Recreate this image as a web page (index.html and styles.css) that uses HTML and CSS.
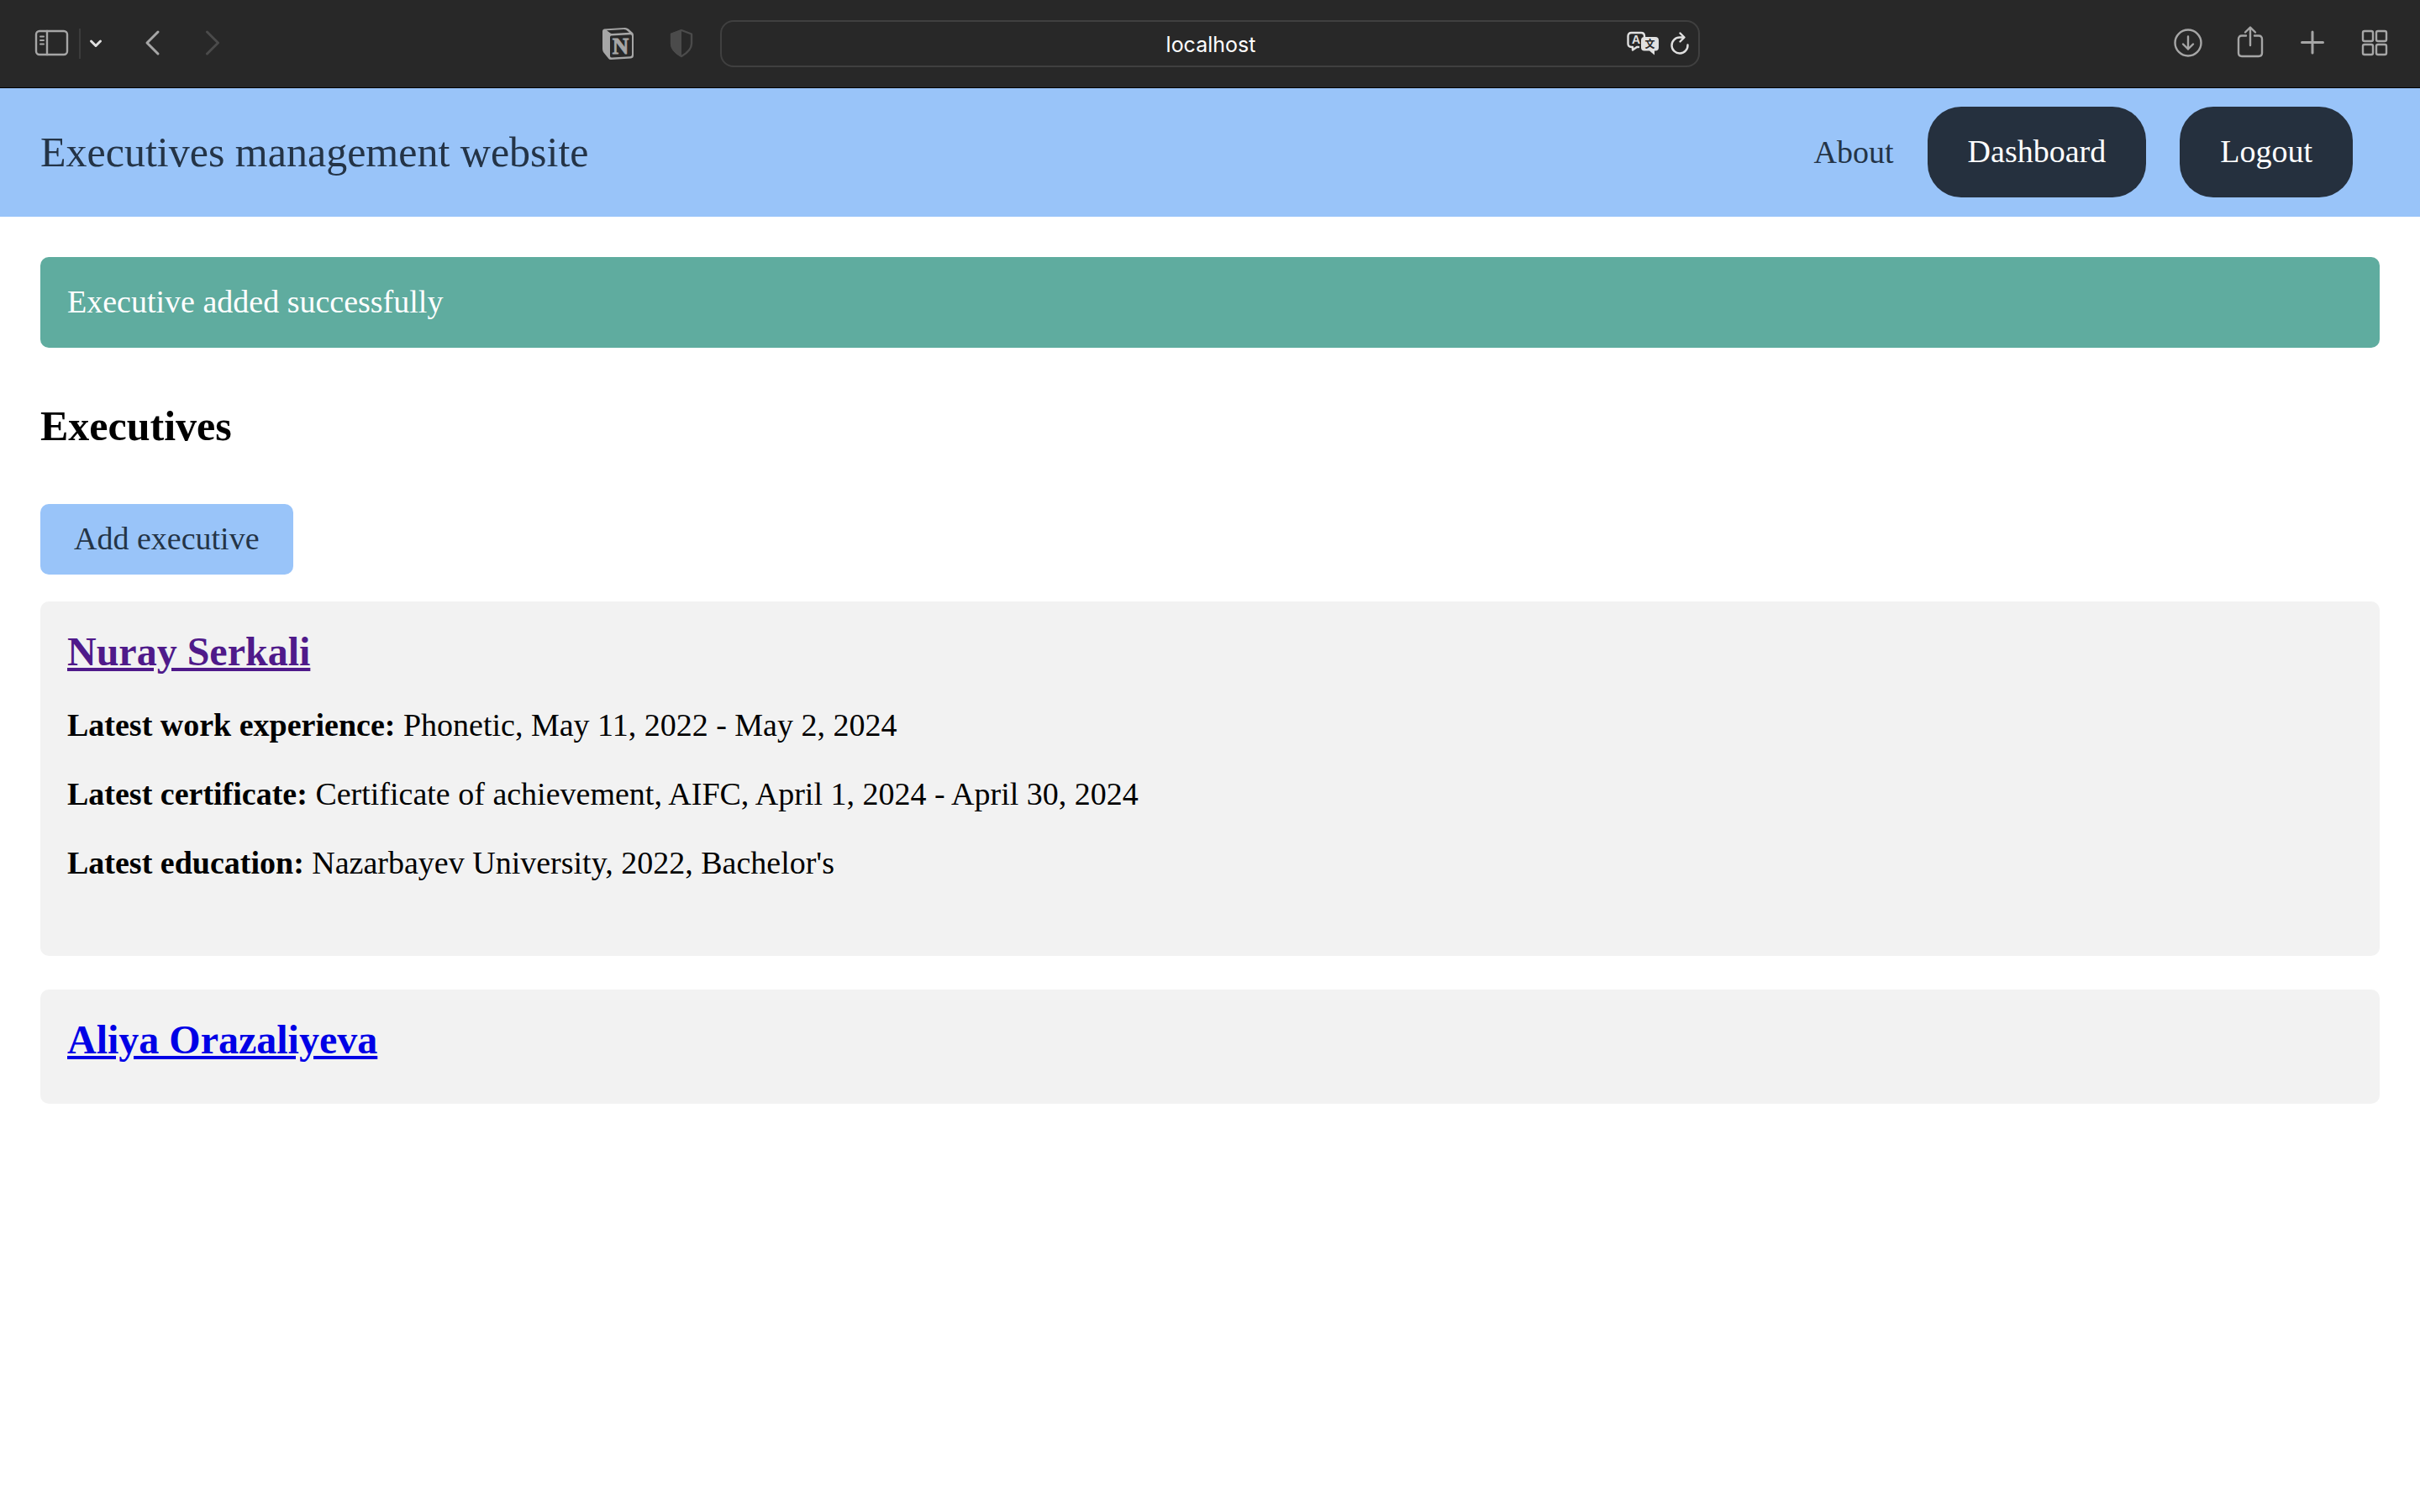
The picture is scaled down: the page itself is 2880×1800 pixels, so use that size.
FILE: index.html
```html
<!DOCTYPE html>
<html lang="en">
<head>
<meta charset="utf-8">
<meta name="viewport" content="width=device-width, initial-scale=1">
<title>Executives management website</title>
<link rel="stylesheet" href="styles.css">
</head>
<body>
<div class="toolbar">
  <div class="tools tools-left">
    <button class="tool" type="button" aria-label="Show sidebar">
      <svg class="icon" viewBox="0 0 44 44"><rect x="3" y="7" width="37" height="28" rx="4"/><path d="M16 7v28"/><path class="thin" d="M8 13.500h4M8 18h4M8 22.500h4"/></svg>
    </button>
    <span class="divider"></span>
    <button class="tool tool-small" type="button" aria-label="Tab groups">
      <svg class="icon icon-light" viewBox="0 0 24 44"><path class="bold" d="M6.500 19l5.500 5.500 5.500-5.500"/></svg>
    </button>
    <button class="tool tool-back" type="button" aria-label="Back">
      <svg class="icon" viewBox="0 0 44 44"><path class="bold" d="M29 8l-13 13 13 13"/></svg>
    </button>
    <button class="tool tool-forward" type="button" aria-label="Forward" disabled>
      <svg class="icon icon-dim" viewBox="0 0 44 44"><path class="bold" d="M15.500 8l13 13-13 13"/></svg>
    </button>
    <button class="tool tool-notion" type="button" aria-label="Notion">
      <svg class="icon" viewBox="1 0 44 44"><path class="solid" fill-rule="evenodd" d="M5 4.500L30 3Q32 3 34 4.500L39 9Q40 10 40 12V36Q40 39 37 39.500L13 41Q11 41 10 39.500L4 32Q3 30.500 3 28V7Q3 5 5 4.500ZM8 6.200L12.500 9.500Q13.500 10 15 10L35 8.700L31 5.600Q30 5 28 5.100ZM13.500 12.500Q12 12.600 12 14.500V36.500Q12 38.500 14 38.400L36 37.200Q38 37 38 35V13Q38 11 36 11.200Z"/><text class="mark mark-n" x="24.500" y="34">N</text></svg>
    </button>
    <button class="tool" type="button" aria-label="Privacy report">
      <svg class="icon icon-dim" viewBox="0 0 44 44"><path d="M22 6l12 4.500V22c0 6-5 11-12 15-7-4-12-9-12-15V10.500z"/><path class="solid" d="M22 5v33C14 34 9 28 9 22V10z"/></svg>
    </button>
  </div>
  <div class="address">
    <input class="address-input" type="text" value="localhost" aria-label="Address">
    <div class="address-actions">
      <button class="tool tool-translate" type="button" aria-label="Translate">
        <svg class="icon icon-light" viewBox="2 0 40 44"><path d="M17 26h-2L10 29.500V26H8.500q-4 0-4-4V13q0-4 4-4H20q4 0 4 4v1.500"/><text class="mark mark-a" x="14" y="22">A</text><path class="solid" d="M24 14h13q4 0 4 4v8.500q0 4-4 4h-1v5l-6-5h-6q-4 0-4-4V18q0-4 4-4z"/><text class="mark mark-cjk" x="30.500" y="27">文</text></svg>
      </button>
      <button class="tool tool-small" type="button" aria-label="Reload">
        <svg class="icon icon-light" viewBox="1 0 24 44"><path d="M18 14.500H13A9.500 9.500 0 1 0 22.500 23.500M13.500 9.500l5 5-5 5"/></svg>
      </button>
    </div>
  </div>
  <div class="tools tools-right">
    <button class="tool" type="button" aria-label="Downloads">
      <svg class="icon" viewBox="0 0 44 44"><circle cx="22" cy="21" r="15.500"/><path d="M22 13.500v15M16 22.500l6 6 6-6"/></svg>
    </button>
    <button class="tool" type="button" aria-label="Share">
      <svg class="icon" viewBox="0 0 44 44"><path d="M17 12.500h-5q-4 0-4 4V33q0 4 4 4h20q4 0 4-4V16.500q0-4-4-4h-5M22 24V3M16 8.500l6-6 6 6"/></svg>
    </button>
    <button class="tool" type="button" aria-label="New tab">
      <svg class="icon" viewBox="0 0 44 44"><path class="bold" d="M22 8v25M9.500 20.500h25"/></svg>
    </button>
    <button class="tool" type="button" aria-label="Tab overview">
      <svg class="icon" viewBox="0 0 44 44"><rect x="8" y="7" width="12" height="12" rx="2"/><rect x="24" y="7" width="12" height="12" rx="2"/><rect x="8" y="23" width="12" height="12" rx="2"/><rect x="24" y="23" width="12" height="12" rx="2"/></svg>
    </button>
  </div>
</div>

<header class="site-header">
  <a class="brand" href="#">Executives management website</a>
  <nav class="nav">
    <a class="nav-link" href="#about">About</a>
    <a class="nav-link nav-pill" href="#dashboard">Dashboard</a>
    <a class="nav-link nav-pill" href="#logout">Logout</a>
  </nav>
</header>

<main class="content">
  <p class="alert" role="status">Executive added successfully</p>
  <h1 class="page-title">Executives</h1>
  <button class="add-button" type="button">Add executive</button>
  <article class="card">
    <h2 class="card-name"><a class="name-link name-visited" href="#nuray">Nuray Serkali</a></h2>
    <div class="details">
      <p class="detail"><strong>Latest work experience:</strong> Phonetic, May 11, 2022 - May 2, 2024</p>
      <p class="detail"><strong>Latest certificate:</strong> Certificate of achievement, AIFC, April 1, 2024 - April 30, 2024</p>
      <p class="detail"><strong>Latest education:</strong> Nazarbayev University, 2022, Bachelor's</p>
    </div>
  </article>
  <article class="card">
    <h2 class="card-name"><a class="name-link" href="#aliya">Aliya Orazaliyeva</a></h2>
  </article>
</main>
</body>
</html>
```
FILE: styles.css
```css
* {
  box-sizing: border-box;
}

body {
  margin: 0;
  background: #fff;
  color: #000;
  font: 38px/42px "Liberation Serif", "Times New Roman", serif;
}

button,
input {
  margin: 0;
  padding: 0;
  border: 0;
  background: none;
  font: inherit;
}

/* Browser toolbar */
.toolbar {
  display: grid;
  grid-template-columns: 1fr 40.5% 1fr;
  align-items: center;
  padding: 24px 0;
  background: #282828;
  border-bottom: 1px solid #000;
}

.tools {
  display: flex;
  align-items: center;
}

.tools-left {
  padding: 0 24px 0 40px;
}

.tools-right {
  justify-content: flex-end;
  gap: 30px;
  padding-right: 32px;
}

.tool {
  display: block;
  flex: none;
  width: 44px;
  height: 44px;
}

.tool-small {
  width: 24px;
}

.tool-translate {
  width: 40px;
}

.tool-back {
  margin-left: 33px;
}

.tool-forward {
  margin-left: 28px;
}

.tool-notion {
  margin: 0 30px 0 auto;
}

.divider {
  width: 2px;
  height: 36px;
  margin: 0 6px 0 10px;
  background: #3c3c3c;
}

.icon {
  display: block;
  width: 100%;
  height: 100%;
  fill: none;
  stroke: #a6a6a6;
  stroke-width: 2.4;
  stroke-linecap: round;
  stroke-linejoin: round;
  color: #a6a6a6;
}

.icon-light {
  stroke: #e0e0e0;
  color: #e0e0e0;
}

.icon-dim {
  stroke: #4b4b4b;
  color: #4b4b4b;
}

.icon .bold {
  stroke-width: 3;
}

.icon .thin {
  stroke-width: 2;
}

.icon .solid {
  fill: currentColor;
  stroke: none;
}

.mark {
  fill: currentColor;
  stroke: none;
  text-anchor: middle;
}

.mark-n {
  stroke: currentColor;
  stroke-width: 1;
  font: bold 27px "Liberation Serif", serif;
}

.mark-a {
  font: bold 14px "Liberation Sans", sans-serif;
}

.mark-cjk {
  fill: #282828;
  font: bold 12px "Noto Sans CJK SC", sans-serif;
}

.address {
  display: grid;
  align-items: center;
  height: 56px;
  border: 2px solid #404040;
  border-radius: 16px;
}

.address-input {
  grid-area: 1 / 1;
  width: 100%;
  padding: 3px 0 1px 2px;
  color: #fff;
  font: 25px/32px Inter, "Liberation Sans", sans-serif;
  text-align: center;
}

.address-actions {
  grid-area: 1 / 1;
  justify-self: end;
  display: flex;
  gap: 12px;
  padding-right: 10px;
}

/* Site header */
.site-header {
  display: flex;
  align-items: center;
  justify-content: space-between;
  padding: 22px 80px 23px 48px;
  background: #99c4f9;
}

.brand {
  color: #243447;
  font-size: 50px;
  line-height: 56px;
  text-decoration: none;
}

.nav {
  display: flex;
  align-items: center;
  gap: 40px;
}

.nav-link {
  color: #243447;
  text-decoration: none;
}

.nav-pill {
  padding: 32px 48px 34px;
  border-radius: 40px;
  background: #25303e;
  color: #fff;
}

/* Page */
.content {
  padding: 48px;
}

.alert {
  margin: 0;
  padding: 32px 32px 34px;
  border-radius: 10px;
  background: #5fac9f;
  color: #fff;
}

.page-title {
  margin: 64px 0;
  font-size: 50px;
  line-height: 58px;
}

.add-button {
  display: block;
  margin-bottom: 32px;
  padding: 20px 40px 22px;
  border-radius: 10px;
  background: #99c4f9;
  color: #243447;
}

.card {
  margin-bottom: 40px;
  padding: 32px 32px 48px;
  border-radius: 10px;
  background: #f2f2f2;
}

.card-name {
  margin: 0;
  font-size: 48px;
  line-height: 56px;
}

.name-link {
  color: #0000e6;
}

.name-visited {
  color: #4f1a8a;
}

.details {
  padding: 38px 0 42px;
}

.detail {
  margin: 0 0 40px;
}

.detail:last-child {
  margin-bottom: 0;
}
```
